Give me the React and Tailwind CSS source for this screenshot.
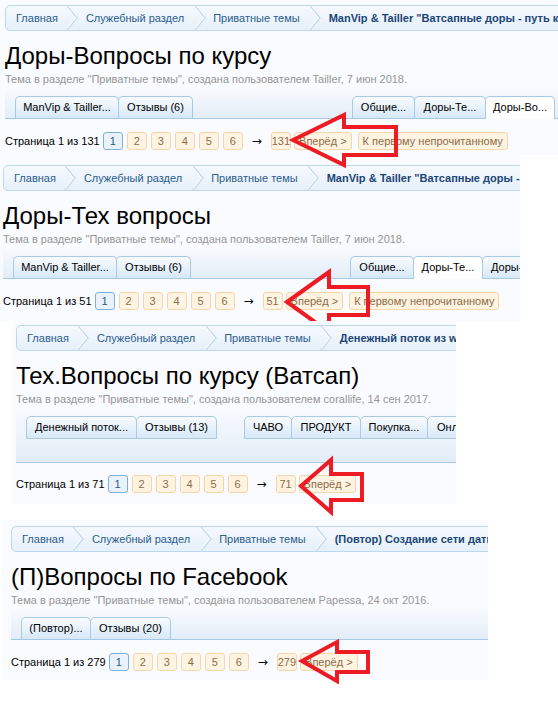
import React from "react";

function Chevron() {
  return (
    <svg width="11" height="24" viewBox="0 0 11 24" className="shrink-0">
      <polyline points="0,0 10,12 0,24" fill="none" stroke="#c3daee" strokeWidth="1.3" />
      <polyline points="-1.5,0 8.5,12 -1.5,24" fill="none" stroke="#ffffff" strokeWidth="1" />
    </svg>
  );
}

function Breadcrumb({ last }) {
  return (
    <div className="flex h-[26px] w-[900px] items-center whitespace-nowrap rounded-[5px] border border-[#bdd7ec] bg-gradient-to-b from-[#f5f9fd] to-[#e6f0fa] text-[11px]">
      <span className="pl-[10px] pr-[9px] text-[#2b5d8d]">Главная</span>
      <Chevron />
      <span className="pl-[8px] pr-[11px] text-[#2b5d8d]">Служебный раздел</span>
      <Chevron />
      <span className="pl-[7px] pr-[10px] text-[#2b5d8d]">Приватные темы</span>
      <Chevron />
      <span className="pl-[8px] font-bold text-[#1b4676]">{last}</span>
    </div>
  );
}

// w: fixed width class, or padding class for a tab cut by the panel edge
function Tab({ w, active, boxed, first, children }) {
  let look = "h-[22px] border-b-0 bg-gradient-to-b from-[#f8fbfe] to-[#d7e8f7]";
  if (active) look = "h-[23px] border-b-0 bg-white";
  if (boxed) look = "h-[23px] border-b bg-gradient-to-b from-[#f8fbfe] to-[#d7e8f7]";
  return (
    <div
      className={`${w} ${first ? "" : "-ml-px"} ${look} shrink-0 overflow-hidden whitespace-nowrap rounded-t-[5px] border border-[#a8cae4] text-center text-[11px] leading-[21px] text-black`}
    >
      {children}
    </div>
  );
}

function PageBox({ current, children, extra = "" }) {
  return (
    <span
      className={`${extra} h-[18px] min-w-[20px] shrink-0 rounded-[3px] border text-center leading-[16px] ${
        current
          ? "border-[#7fb1dc] bg-[#e9f2fb] text-[#2a5a88]"
          : "border-[#f4d6aa] bg-[#fff3e2] text-[#8c6d48]"
      }`}
    >
      {children}
    </span>
  );
}

function PageNav({ total, unread }) {
  return (
    <div className="flex h-[18px] items-center whitespace-nowrap text-[11px]">
      <span className="mr-[3px] text-black">Страница 1 из {total}</span>
      <PageBox current>1</PageBox>
      <PageBox extra="ml-[4px]">2</PageBox>
      <PageBox extra="ml-[4px]">3</PageBox>
      <PageBox extra="ml-[4px]">4</PageBox>
      <PageBox extra="ml-[4px]">5</PageBox>
      <PageBox extra="ml-[4px]">6</PageBox>
      <span className="w-[28px] shrink-0 text-center font-['DejaVu_Sans',sans-serif] text-[12px] leading-[18px] text-black">→</span>
      <PageBox>{total}</PageBox>
      <PageBox extra="ml-[3px] px-[4px]">Вперёд &gt;</PageBox>
      {unread && <PageBox extra="ml-[6px] px-[4px]">К первому непрочитанному</PageBox>}
    </div>
  );
}

function Panel({ box, crumb, title, author, date, tabs, total, unread, tall }) {
  return (
    <div className={`${box} overflow-hidden bg-[#fafbfe]`}>
      <Breadcrumb last={crumb} />
      <h1 className="mt-[11px] whitespace-nowrap text-[24px] font-normal leading-[28px] text-black">{title}</h1>
      <p className="mt-[2px] whitespace-nowrap text-[11px] leading-[14px] text-[#969696]">
        Тема в разделе "Приватные темы", создана пользователем {author}, {date}.
      </p>
      <div
        className={`${tall ? "h-[57px]" : "h-[33px]"} flex items-start border-b border-[#a5c9e4] bg-gradient-to-b from-transparent to-[#e2edf8] pl-[10px] pt-[10px]`}
      >
        {tabs}
      </div>
      <div className={tall ? "mt-[12px]" : "mt-[13px]"}>
        <PageNav total={total} unread={unread} />
      </div>
    </div>
  );
}

export default function App() {
  return (
    <div className="relative h-[704px] w-[558px] overflow-hidden bg-white font-['Liberation_Sans',Arial,sans-serif]">
      <Panel
        box="w-[558px] h-[155px] pl-[5px] pt-[5px]"
        crumb={'ManVip & Tailler "Ватсапные доры - путь к успеху"'}
        title="Доры-Вопросы по курсу"
        author="Tailler"
        date="7 июн 2018"
        total={131}
        unread
        tabs={
          <>
            <div className="flex w-[337px] shrink-0">
              <Tab w="w-[104px]" first>ManVip &amp; Tailler...</Tab>
              <Tab w="w-[75px]">Отзывы (6)</Tab>
            </div>
            <Tab w="w-[63px]" first>Общие...</Tab>
            <Tab w="w-[72px]">Доры-Те...</Tab>
            <Tab w="px-[7px]" active>Доры-Во...</Tab>
          </>
        }
      />
      <Panel
        box="w-[520px] h-[167px] pl-[3px] pt-[10px]"
        crumb={'ManVip & Tailler "Ватсапные доры - путь к успеху"'}
        title="Доры-Тех вопросы"
        author="Tailler"
        date="7 июн 2018"
        total={51}
        unread
        tabs={
          <>
            <div className="flex w-[337px] shrink-0">
              <Tab w="w-[104px]" first>ManVip &amp; Tailler...</Tab>
              <Tab w="w-[75px]">Отзывы (6)</Tab>
            </div>
            <Tab w="w-[64px]" first>Общие...</Tab>
            <Tab w="w-[70px]" active>Доры-Те...</Tab>
            <Tab w="px-[8px]">Доры-Во...</Tab>
          </>
        }
      />
      <Panel
        box="ml-[13px] w-[443px] h-[182px] pl-[3px] pt-[3px]"
        crumb="Денежный поток из whatsapp"
        title="Тех.Вопросы по курсу (Ватсап)"
        author="corallife"
        date="14 сен 2017"
        total={71}
        tall
        tabs={
          <>
            <div className="flex w-[218px] shrink-0">
              <Tab w="w-[111px]" first boxed>Денежный поток...</Tab>
              <Tab w="w-[81px]" boxed>Отзывы (13)</Tab>
            </div>
            <Tab w="w-[48px]" first boxed>ЧАВО</Tab>
            <Tab w="w-[70px]" boxed>ПРОДУКТ</Tab>
            <Tab w="w-[68px]" boxed>Покупка...</Tab>
            <Tab w="px-[9px]" boxed>Онлайн...</Tab>
          </>
        }
      />
      <Panel
        box="mt-[16px] ml-[2px] w-[486px] h-[160px] pl-[9px] pt-[6px]"
        crumb="(Повтор) Создание сети датинг сайтов"
        title="(П)Вопросы по Facebook"
        author="Papessa"
        date="24 окт 2016"
        total={279}
        tabs={
          <>
            <Tab w="w-[70px]" first>(Повтор)...</Tab>
            <Tab w="w-[81px]">Отзывы (20)</Tab>
          </>
        }
      />

      <svg className="pointer-events-none absolute left-0 top-0" width="558" height="704">
        <defs>
          <clipPath id="cut2">
            <rect x="0" y="0" width="558" height="321" />
          </clipPath>
        </defs>
        <g fill="none" stroke="#ed1c24" strokeWidth="4" strokeLinejoin="miter">
          <polygon points="293,140 344,115 344,127 396,127 396,155 344,155 344,165" />
          <polygon clipPath="url(#cut2)" points="287,302 329,272 329,287 368,287 368,315 329,315 329,332" />
          <polygon points="301,486 331,460 331,474 362,474 362,500 331,500 331,512" />
          <polygon points="302,661 337,642 337,652 368,652 368,672 337,672 337,681" />
        </g>
      </svg>
    </div>
  );
}
